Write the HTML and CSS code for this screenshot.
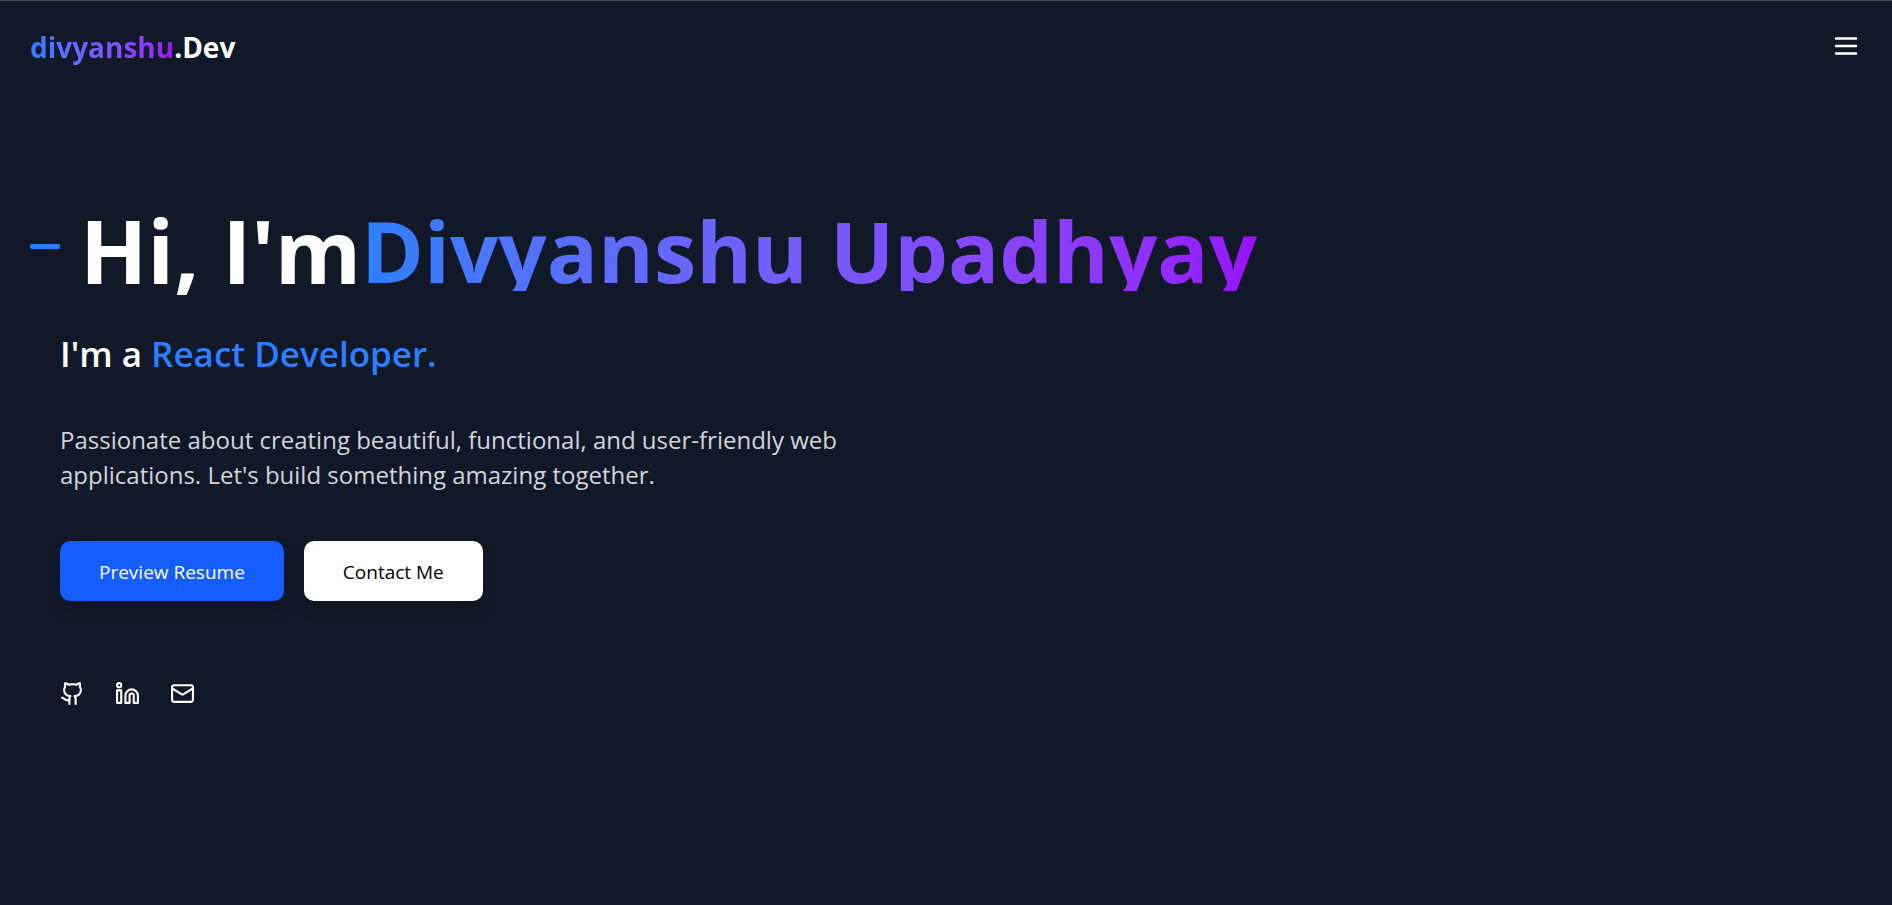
FILE: index.html
```html
<!DOCTYPE html>
<html lang="en">
<head>
<meta charset="utf-8">
<meta name="viewport" content="width=device-width, initial-scale=1">
<title>divyanshu.Dev</title>
<link rel="stylesheet" href="styles.css">
</head>
<body>
<header class="navbar">
  <a class="logo" href="#"><span class="gradient-text">divyanshu</span>.Dev</a>
  <button class="menu-button" type="button" aria-label="Open menu">
    <svg class="menu-icon" viewBox="0 0 24 24"><path d="M4 6h16M4 12h16M4 18h16"/></svg>
  </button>
</header>
<main>
  <section class="hero">
    <h1 class="title"><span class="dash"></span><span class="greeting">Hi, I'm</span><span class="name gradient-text">Divyanshu Upadhyay</span></h1>
    <div class="details">
      <h2 class="role">I'm a <span class="role-name">React Developer.</span></h2>
      <p class="intro">Passionate about creating beautiful, functional, and user-friendly web applications. Let's build something amazing together.</p>
      <div class="actions">
        <button class="button primary" type="button">Preview Resume</button>
        <button class="button secondary" type="button">Contact Me</button>
      </div>
      <nav class="social" aria-label="Social links">
        <a href="#" aria-label="GitHub"><svg class="icon" viewBox="0 0 24 24"><path d="M15 22v-4a4.8 4.8 0 0 0-1-3.500c3 0 6-2 6-5.500.080-1.250-.270-2.480-1-3.500.280-1.150.280-2.350 0-3.500 0 0-1 0-3 1.500-2.640-.500-5.360-.500-8 0C6 2 5 2 5 2c-.300 1.150-.300 2.350 0 3.500A5.403 5.403 0 0 0 4 9c0 3.500 3 5.500 6 5.500-.390.490-.680 1.050-.850 1.650-.170.600-.220 1.230-.150 1.850v4"/><path d="M9 18c-4.510 2-5-2-7-2"/></svg></a>
        <a href="#" aria-label="LinkedIn"><svg class="icon" viewBox="0 0 24 24"><path d="M16 8a6 6 0 0 1 6 6v7h-4v-7a2 2 0 0 0-4 0v7h-4v-7a6 6 0 0 1 6-6z"/><rect width="4" height="12" x="2" y="9"/><circle cx="4" cy="4" r="2"/></svg></a>
        <a href="#" aria-label="Email"><svg class="icon" viewBox="0 0 24 24"><rect width="20" height="16" x="2" y="4" rx="2"/><path d="m22 7-8.970 5.700a1.940 1.940 0 0 1-2.060 0L2 7"/></svg></a>
      </nav>
    </div>
  </section>
</main>
</body>
</html>
```
FILE: styles.css
```css
* {
  box-sizing: border-box;
}

body {
  margin: 0;
  min-height: 100vh;
  background: #111b2a;
  color: #fff;
  font-family: "Segoe UI", "Open Sans", "Noto Sans", sans-serif;
}

h1, h2, p {
  margin: 0;
}

.navbar {
  display: flex;
  align-items: center;
  justify-content: space-between;
  height: 91px;
  padding: 0 31px 0 30px;
  border-top: 1px solid #454d4f;
  background: #111827;
}

.logo {
  padding-top: 2px;
  color: #fff;
  font-size: 28px;
  font-weight: 700;
  line-height: 40px;
  text-decoration: none;
}

.gradient-text {
  background: linear-gradient(to right in oklab, #2b7fff, #9810fa);
  background-clip: text;
  color: transparent;
}

.menu-button {
  display: flex;
  padding: 0;
  border: 0;
  background: none;
  color: #fff;
}

.menu-icon {
  width: 30px;
  height: 30px;
  fill: none;
  stroke: currentColor;
  stroke-width: 2;
  stroke-linecap: round;
}

.hero {
  padding: 110px 30px 140px;
  background: #111827;
}

.title {
  display: flex;
  font-size: 85px;
  font-weight: 700;
  line-height: 82px;
}

.dash {
  width: 30px;
  height: 5px;
  margin: 43px 20px 0 0;
  border-radius: 2px;
  background: #2b7fff;
}

.greeting,
.name {
  padding-top: 8px;
}

.greeting {
  font-size: 88px;
}

.details {
  padding: 0 30px;
}

.role {
  margin-top: 37px;
  font-size: 35px;
  font-weight: 600;
  line-height: 52px;
}

.role-name {
  color: #2b7fff;
}

.intro {
  max-width: 800px;
  margin-top: 42px;
  color: #d1d5dc;
  font-size: 24px;
  line-height: 35px;
}

.actions {
  display: flex;
  gap: 20px;
  margin-top: 49px;
}

.button {
  padding: 17px 39px 15px;
  border: 0;
  border-radius: 10px;
  box-shadow: 0 10px 15px rgba(0, 0, 0, 0.1);
  font: inherit;
  font-size: 19px;
  line-height: 28px;
}

.primary {
  background: #155dfc;
  color: #fff;
}

.secondary {
  background: #fff;
  color: #000;
}

.social {
  display: flex;
  gap: 30px;
  margin-top: 80px;
}

.social a {
  display: flex;
  color: #fff;
}

.icon {
  width: 25px;
  height: 25px;
  fill: none;
  stroke: currentColor;
  stroke-width: 2;
  stroke-linecap: round;
  stroke-linejoin: round;
}
```
